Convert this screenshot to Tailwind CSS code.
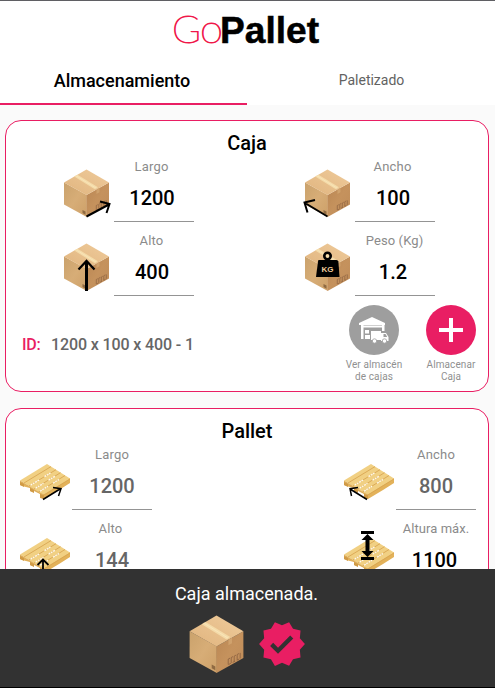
<!DOCTYPE html>
<html lang="es">
<head>
<meta charset="utf-8">
<title>GoPallet</title>
<script src="https://cdn.jsdelivr.net/npm/@tailwindcss/browser@4"></script>
</head>
<body class="bg-[#fafafa] font-['Roboto',sans-serif] text-black">
<svg width="0" height="0" class="absolute">
  <defs>
    <linearGradient id="boxTop" x1="0" y1="1" x2="1" y2="0"><stop offset="0" stop-color="#e0b47e"/><stop offset="1" stop-color="#efcb9b"/></linearGradient>
    <linearGradient id="boxLeft" x1="0" y1="0" x2="1" y2="1"><stop offset="0" stop-color="#caa26c"/><stop offset=".5" stop-color="#d7ad77"/><stop offset="1" stop-color="#cda068"/></linearGradient>
    <linearGradient id="boxRight" x1="0" y1="0" x2="1" y2="1"><stop offset="0" stop-color="#b98653"/><stop offset=".5" stop-color="#c5925d"/><stop offset="1" stop-color="#bf8c59"/></linearGradient>
    <symbol id="box" viewBox="0 0 46 48">
      <path d="M.5 13.500 23.300 26v22L.5 35.500z" fill="url(#boxLeft)"/>
      <path d="M45.500 13.500 23 26v22l22.500-12.500z" fill="url(#boxRight)"/>
      <path d="M23 .5l22.500 13L23 26 .5 13.500z" fill="url(#boxTop)"/>
      <path d="M14 5.700l20.500 12.600-3.200 1.900L10.700 7.600z" fill="#f4dba9"/>
      <path d="M12.400 6.700l20.500 12.600" stroke="#fbe9c0" stroke-width=".6"/>
      <path d="M33 20.500l3-1.700v4.500l-3 1.800z" fill="#d0a26d"/>
      <path d="M19 41l3 1.600v3.200l-3-1.700z" fill="#8f6a42"/>
      <path d="M32.800 41v-4.500l1.500-.8m1 4v-4.500l1.500-.8m1 4V34l1.500-.8m1 4v-4.500l1.500-.8m1 4v-4.500M33 41l2-1m1.500-.8 2-1m1.500-.8 2-1" fill="none" stroke="#8b6140" stroke-width=".7"/>
    </symbol>
    <symbol id="pallet" viewBox="0 0 50 36">
      <path d="M0 17l20 12 30-15v5L39 26l-15 9-4-1v-4l-6-3v1.500l-4-1.500v-3L4 22.500 0 21z" fill="#e3b25a"/>
      <path d="M0 18l4 2v3l-4-2zM10 24l4 2v3l-4-2zM20 30l4 1v4l-4-1.500z" fill="#d09a46"/>
      <path d="M0 16.500L27 0l23 14.500L23 31z" fill="#f1d083"/>
      <path d="M4 19L31 2.600M9 22L36 5.700M14 25L40.500 8.700M18.500 28L45 11.500" stroke="#dcab58" stroke-width="1" fill="none"/>
      <path d="M10.500 21.200l9-5.500M24.500 12.600l6-3.600M15.500 24.200l8-4.900M28.500 16.200l7-4.200M20 27.200l8-5M33 19.200l6-3.700" stroke="#fffaf0" stroke-width="1.300" stroke-dasharray="2 .7"/>
      <path d="M0 17l20.500 12.500L24 31l26-16" fill="none" stroke="#d8a450" stroke-width=".8"/>
    </symbol>
  </defs>
</svg>

<div class="relative flex h-[688px] w-[495px] flex-col overflow-hidden">
  <header class="h-[105px] shrink-0 border-t border-[#5f5f63] bg-white">
    <div class="flex h-[54px] justify-center">
      <svg class="h-[54px] w-[160px]" viewBox="0 0 160 54" aria-label="GoPallet">
        <text x="4" y="42" font-family="Lato, sans-serif" font-weight="100" font-size="37" fill="#f0184a" stroke="#f0184a" stroke-width="1" textLength="29" lengthAdjust="spacingAndGlyphs">G</text>
        <text x="32" y="42" font-family="Lato, sans-serif" font-weight="100" font-size="39" fill="#f0184a" stroke="#f0184a" stroke-width="1" textLength="23" lengthAdjust="spacingAndGlyphs">o</text>
        <text x="52" y="42" font-family="Liberation Sans, sans-serif" font-weight="700" font-size="37" stroke="#000" stroke-width=".5" textLength="99" lengthAdjust="spacingAndGlyphs">Pallet</text>
      </svg>
    </div>
    <nav class="flex h-[50px] text-center">
      <div class="w-[247px] border-b-2 border-[#e91e63] pr-[3px] text-[18px] leading-[51px] font-medium"><span>Almacenamiento</span></div>
      <div class="flex-1 pl-[1px] text-[14px] leading-[50px] text-[#626262]"><span>Paletizado</span></div>
    </nav>
  </header>

  <section class="mt-[15px] ml-[5px] h-[272px] w-[484px] shrink-0 rounded-[16px] border border-[#e91e63] bg-white">
    <h2 class="h-[37px] text-center text-[20px] leading-[44px] font-medium"><span>Caja</span></h2>
    <div class="grid gap-y-[10px] pl-[58px]">
      <div class="flex h-16">
        <svg class="mt-[11px] h-12 w-[46px] overflow-visible" viewBox="0 0 46 48"><use href="#box" x="-.5" width="46" height="48"/><path d="M22.500 47.500L45 35.500M36 32.500l9.500 2.500L42.500 44" fill="none" stroke="#000" stroke-width="2"/></svg>
        <div class="ml-[3.500px] w-20 border-b border-[#949494] text-center"><div class="h-[18px] pr-[4px] text-[13px] leading-[18px] tracking-[.2px] text-[#8b8b8b]">Largo</div><div class="pr-[3px] text-[20px] leading-[45px] font-medium">1200</div></div>
        <svg class="mt-[11px] ml-[111.500px] h-12 w-[46px] overflow-visible" viewBox="0 0 46 48"><use href="#box" x="-.5" width="46" height="48"/><path d="M22.500 47.500L0 34M2.500 43.500L-.5 33.500l10.500-2.500" fill="none" stroke="#000" stroke-width="2"/></svg>
        <div class="ml-[3.500px] w-20 border-b border-[#949494] text-center"><div class="h-[18px] pr-[4px] text-[13px] leading-[18px] tracking-[.2px] text-[#8b8b8b]">Ancho</div><div class="pr-[3px] text-[20px] leading-[45px] font-medium">100</div></div>
      </div>
      <div class="flex h-16">
        <svg class="mt-[11px] h-12 w-[46px] overflow-visible" viewBox="0 0 46 48"><use href="#box" x="-.5" width="46" height="48"/><path d="M22.500 48V19" stroke="#000" stroke-width="3"/><path d="M14.500 26.500l8-8.500 8 8.500" fill="none" stroke="#000" stroke-width="2.300"/></svg>
        <div class="ml-[3.500px] w-20 border-b border-[#949494] text-center"><div class="h-[18px] pr-[4px] text-[13px] leading-[18px] tracking-[.2px] text-[#8b8b8b]">Alto</div><div class="pr-[3px] text-[20px] leading-[45px] font-medium">400</div></div>
        <svg class="mt-[11px] ml-[111.500px] h-12 w-[46px] overflow-visible" viewBox="0 0 46 48"><use href="#box" x="-.5" width="46" height="48"/><path d="M13.500 17h18q1.500 0 1.900 1.500L34.500 34H11l2-15.500q.2-1.500.5-1.500z"/><circle cx="22.500" cy="13" r="3.200" fill="none" stroke="#000" stroke-width="2.600"/><text x="22.500" y="28.500" text-anchor="middle" font-family="Liberation Sans, sans-serif" font-size="8" font-weight="700" fill="#efcb9b">KG</text></svg>
        <div class="ml-[3.500px] w-20 border-b border-[#949494] text-center"><div class="h-[18px] text-[13px] leading-[18px] tracking-[.1px] text-[#8b8b8b]">Peso (Kg)</div><div class="pr-[3px] text-[20px] leading-[45px] font-medium">1.2</div></div>
      </div>
    </div>
    <div class="flex pt-[9px] pl-4">
      <div class="w-[29px] shrink-0 pt-[28px] text-[16px] leading-6 font-medium tracking-[-.2px] text-[#e91e63]">ID:</div>
      <div class="w-[284px] shrink-0 pt-[28px] text-[16px] leading-6 font-medium tracking-[-.12px] text-[#666]"><span>1200 x 100 x 400 - 1</span></div>
      <div class="flex w-[78px] shrink-0 flex-col items-center">
        <svg class="size-[50px]" viewBox="0 0 50 50"><circle cx="25" cy="25" r="25" fill="#9e9e9e"/><path fill="#fff" d="M23 12l13 6v2H10v-2zM12 20h2.500v14H12zM33 20h2.500v6H33zM12 20.500h23v2H12zM16 25h4v3.500h-4zM16 30h5v4h-5z"/><path d="M22 26h10v9H22z" fill="#fff"/><path d="M32 28h5l2.500 4v4H32z" fill="#fff"/><path d="M34.500 29h2l1.700 3h-3.700z" fill="#9e9e9e"/><circle cx="25.500" cy="36" r="2.200" fill="#fff" stroke="#9e9e9e" stroke-width=".8"/><circle cx="35.500" cy="36" r="2.200" fill="#fff" stroke="#9e9e9e" stroke-width=".8"/></svg>
        <div class="mt-1 text-center text-[10px] leading-3 tracking-[.1px] text-[#909090]">Ver almacén<br>de cajas</div>
      </div>
      <div class="flex w-[76px] shrink-0 flex-col items-center">
        <svg class="size-[50px]" viewBox="0 0 50 50"><circle cx="25" cy="25" r="25" fill="#e91e63"/><path d="M13 25h24M25 13v24" stroke="#fff" stroke-width="4"/></svg>
        <div class="mt-1 text-center text-[10px] leading-3 tracking-[.1px] text-[#909090]">Almacenar<br>Caja</div>
      </div>
    </div>
  </section>

  <section class="mt-4 ml-[5px] h-[300px] w-[484px] shrink-0 rounded-[16px] border border-[#e91e63] bg-white">
    <h2 class="h-[37px] text-center text-[20px] leading-[44px] font-medium"><span>Pallet</span></h2>
    <div class="grid gap-y-[10px] pl-[14px]">
      <div class="flex h-16">
        <svg class="mt-[18px] h-9 w-[50px] overflow-visible" viewBox="0 0 50 36"><use href="#pallet" width="50" height="36"/><path d="M23 35.500L40 25M33 23.500l8 1.200L38.500 32" fill="none" stroke="#000" stroke-width="1.500"/></svg>
        <div class="ml-[2px] w-20 border-b border-[#949494] text-center"><div class="h-[18px] text-[13px] leading-[18px] tracking-[.2px] text-[#8b8b8b]">Largo</div><div class="text-[20px] leading-[45px] font-medium text-[#666]">1200</div></div>
        <svg class="mt-[18px] ml-[192px] h-9 w-[50px] overflow-visible" viewBox="0 0 50 36"><use href="#pallet" width="50" height="36"/><path d="M23 35.500L6 25M7.500 32L6 24.700l8-1.200" fill="none" stroke="#000" stroke-width="1.500"/></svg>
        <div class="ml-[2px] w-20 border-b border-[#949494] text-center"><div class="h-[18px] text-[13px] leading-[18px] tracking-[.2px] text-[#8b8b8b]">Ancho</div><div class="text-[20px] leading-[45px] font-medium text-[#666]">800</div></div>
      </div>
      <div class="flex h-16">
        <svg class="mt-[18px] h-9 w-[50px] overflow-visible" viewBox="0 0 50 36"><use href="#pallet" width="50" height="36"/><path d="M23 40V22M17.500 27l5.500-5.500 5.500 5.500" fill="none" stroke="#000" stroke-width="1.800"/></svg>
        <div class="ml-[2px] w-20 border-b border-[#949494] text-center"><div class="h-[18px] pr-[3px] text-[13px] leading-[18px] tracking-[.2px] text-[#8b8b8b]">Alto</div><div class="text-[20px] leading-[45px] font-medium text-[#666]">144</div></div>
        <svg class="mt-[18px] ml-[192px] h-9 w-[50px] overflow-visible" viewBox="0 0 50 36"><use href="#pallet" width="50" height="36"/><path d="M17-7h13v3H17zM17 19h13v3H17zM23.500-4l6 6H25.500v11h4l-6 6-6-6h4V2h-4z"/></svg>
        <div class="ml-[2px] w-20 border-b border-[#949494] text-center"><div class="h-[18px] text-[13px] leading-[18px] tracking-[.05px] whitespace-nowrap text-[#8b8b8b]">Altura máx.</div><div class="pr-[3px] text-[20px] leading-[45px] font-medium">1100</div></div>
      </div>
    </div>
  </section>

  <div class="absolute inset-x-0 bottom-0 h-[119px] border-b border-black bg-[#323232] text-white">
    <div class="pt-[13px] pr-[2px] text-center text-[18px] leading-6"><span>Caja almacenada.</span></div>
    <div class="flex items-center justify-center pt-[9px]">
      <svg class="h-[58px] w-[55px]" viewBox="0 0 46 48" preserveAspectRatio="none"><use href="#box" width="46" height="48"/></svg>
      <svg class="ml-[13px] size-[50px]" viewBox="0 0 24 24"><path fill="#e91e63" d="M23 12l-2.440-2.790.34-3.690-3.610-.82-1.890-3.200L12 2.960 8.600 1.500 6.710 4.690 3.100 5.500l.34 3.700L1 12l2.440 2.790-.34 3.700 3.610.82L8.600 22.500l3.400-1.470 3.400 1.460 1.890-3.190 3.610-.82-.34-3.690L23 12zm-12.910 4.720l-3.800-3.810 1.480-1.480 2.320 2.330 5.850-5.870 1.480 1.480-7.330 7.350z"/></svg>
    </div>
  </div>
</div>
</body>
</html>
